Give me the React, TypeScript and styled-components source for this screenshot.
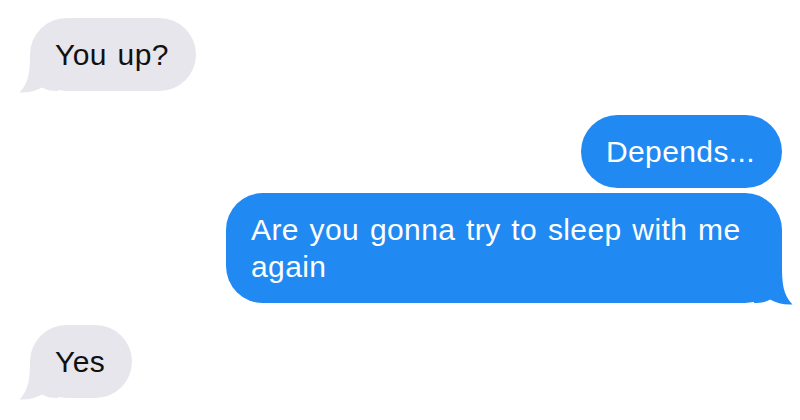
import React from "react";
import styled, { createGlobalStyle } from "styled-components";

const Global = createGlobalStyle`
  html, body { margin: 0; padding: 0; background: #ffffff; }
  body { width: 800px; height: 420px; overflow: hidden; }
`;

const GREY = "#e7e6ec";
const BLUE = "#208af2";

const Thread = styled.div`
  display: flex;
  flex-direction: column;
  padding: 18px 18px 0 30px;
  font-family: "Liberation Sans", Arial, sans-serif;
`;

const Bubble = styled.div<{ $out?: boolean; $gap: number }>`
  position: relative;
  align-self: ${(p) => (p.$out ? "flex-end" : "flex-start")};
  margin-top: ${(p) => p.$gap}px;
  max-width: 504px;
  padding: 18px 27px 18px 25px;
  border-radius: 37px;
  background: ${(p) => (p.$out ? BLUE : GREY)};
  color: ${(p) => (p.$out ? "#ffffff" : "#111111")};
  font-size: 30px;
  line-height: 37px;
  letter-spacing: 0.4px;
  word-spacing: 2px;
`;

const TailSvg = styled.svg<{ $out?: boolean }>`
  position: absolute;
  bottom: -2px;
  width: 40px;
  height: 44px;
  ${(p) => (p.$out ? "right: -12px; transform: scaleX(-1);" : "left: -12px;")}
`;

const Tail = ({ out, color }: { out?: boolean; color: string }) => (
  <TailSvg $out={out} viewBox="0 0 40 44">
    <path
      d="M12 4 C12 22 11 34 1.5 43.5 C10 44 18 42 24 38.5 C28 41 33 42 40 42 L40 4 Z"
      fill={color}
    />
  </TailSvg>
);

export default function App() {
  return (
    <>
      <Global />
      <Thread>
        <Bubble $gap={0}>
          You up?
          <Tail color={GREY} />
        </Bubble>
        <Bubble $out $gap={24}>
          Depends...
        </Bubble>
        <Bubble $out $gap={5}>
          Are you gonna try to sleep with me again
          <Tail out color={BLUE} />
        </Bubble>
        <Bubble $gap={22}>
          Yes
          <Tail color={GREY} />
        </Bubble>
      </Thread>
    </>
  );
}
